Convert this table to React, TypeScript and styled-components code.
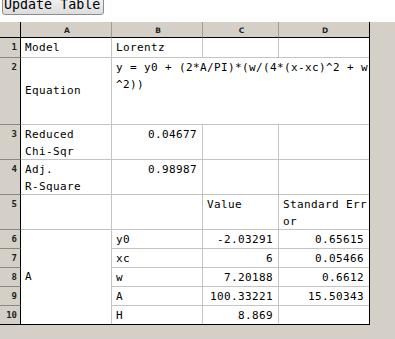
import React from "react";
import styled, { createGlobalStyle } from "styled-components";

const GlobalStyle = createGlobalStyle`
  html, body {
    margin: 0;
    padding: 0;
    background: #ffffff;
  }
  body {
    font-family: "DejaVu Sans Mono", monospace;
  }
`;

interface CellDef {
	text?: string;
	align?: "left" | "right";
	middle?: boolean;
	colSpan?: number;
	rowSpan?: number;
}

interface RowDef {
	n: number;
	height: number;
	cells: CellDef[];
}

const columns = ["A", "B", "C", "D"];
const colWidths = [21, 91, 91, 76, 90];
const headerHeight = 16;

const num = (text: string): CellDef => ({ text, align: "right" });

const rows: RowDef[] = [
	{ n: 1, height: 20, cells: [{ text: "Model" }, { text: "Lorentz" }, {}, {}] },
	{
		n: 2,
		height: 67,
		cells: [
			{ text: "Equation", middle: true },
			{ text: "y = y0 + (2*A/PI)*(w/(4*(x-xc)^2 + w\n^2))", colSpan: 3 },
		],
	},
	{ n: 3, height: 35, cells: [{ text: "Reduced\nChi-Sqr" }, num("0.04677"), {}, {}] },
	{ n: 4, height: 35, cells: [{ text: "Adj.\nR-Square" }, num("0.98987"), {}, {}] },
	{ n: 5, height: 35, cells: [{}, {}, { text: "Value" }, { text: "Standard Err\nor" }] },
	{
		n: 6,
		height: 19,
		cells: [
			{ text: "A", middle: true, rowSpan: 5 },
			{ text: "y0" },
			num("-2.03291"),
			num("0.65615"),
		],
	},
	{ n: 7, height: 19, cells: [{ text: "xc" }, num("6"), num("0.05466")] },
	{ n: 8, height: 19, cells: [{ text: "w" }, num("7.20188"), num("0.6612")] },
	{ n: 9, height: 19, cells: [{ text: "A" }, num("100.33221"), num("15.50343")] },
	{ n: 10, height: 18, cells: [{ text: "H" }, num("8.869"), {}] },
];

/* exported component */
const App = () => {
	const lastRow = rows[rows.length - 1].n;
	return (
		<>
			<GlobalStyle />
			<Page>
				<Toolbar>
					<UpdateButton type="button">Update Table</UpdateButton>
				</Toolbar>
				<SheetArea>
					<Sheet
						$cols={colWidths.map((w) => `${w}px`).join(" ")}
						$rows={[headerHeight, ...rows.map((r) => r.height)]
							.map((h) => `${h}px`)
							.join(" ")}
					>
						<Corner />
						{columns.map((c, i) => (
							<ColHeader key={c} $last={i === columns.length - 1}>
								{c}
							</ColHeader>
						))}
						{rows.map((row) => {
							let col = 0;
							return (
								<React.Fragment key={row.n}>
									<RowHeader $last={row.n === lastRow}>{row.n}</RowHeader>
									{row.cells.map((cell, i) => {
										const span = cell.colSpan || 1;
										const rowSpan = cell.rowSpan || 1;
										// cells of rows 7-10 start after the merged "A" cell
										const start = row.n > 6 ? 1 : 0;
										col += span;
										const endsRight = start + col === columns.length;
										const endsBottom = row.n + rowSpan - 1 === lastRow;
										return (
											<Cell
												key={i}
												$align={cell.align || "left"}
												$middle={!!cell.middle}
												$colSpan={span}
												$rowSpan={rowSpan}
												$noRight={endsRight}
												$noBottom={endsBottom}
											>
												{cell.text}
											</Cell>
										);
									})}
								</React.Fragment>
							);
						})}
					</Sheet>
				</SheetArea>
			</Page>
		</>
	);
};

export default App;

// Styled Components
const Page = styled.div`
	display: flex;
	flex-direction: column;
	min-height: 100vh;
`;

const Toolbar = styled.div`
	height: 22px;
	overflow: hidden;
	padding-left: 2px;
	background: #ffffff;
`;

const UpdateButton = styled.button`
	display: block;
	margin-top: -6px;
	height: 21px;
	padding: 0 3px 0 1px;
	font-family: "DejaVu Sans Mono", monospace;
	font-size: 13.33px;
	color: #000000;
	background: linear-gradient(#f6f6f6, #dcdcdc);
	border: 1px solid #8c8c8c;
	border-radius: 3px;
`;

const SheetArea = styled.div`
	flex: 1;
	background: #d4d0c8;
`;

const Sheet = styled.div<{ $cols: string; $rows: string }>`
	display: grid;
	grid-template-columns: ${(p) => p.$cols};
	grid-template-rows: ${(p) => p.$rows};
	width: max-content;
	background: #ffffff;
	border-right: 1px solid #000000;
	border-bottom: 1px solid #000000;
`;

const HeaderBase = styled.div`
	box-sizing: border-box;
	background: #d4d0c8;
	color: #222222;
	font-weight: bold;
`;

const Corner = styled(HeaderBase)`
	border-right: 1px solid #000000;
	border-bottom: 1px solid #000000;
`;

const ColHeader = styled(HeaderBase)<{ $last: boolean }>`
	display: flex;
	align-items: center;
	justify-content: center;
	padding: 1px 0 0 2px;
	font-family: "DejaVu Sans", sans-serif;
	font-size: 7.5px;
	border-right: ${(p) => (p.$last ? "none" : "1px solid #a09c94")};
	border-bottom: 1px solid #000000;
`;

const RowHeader = styled(HeaderBase)<{ $last: boolean }>`
	padding: 1px 3px 0 0;
	text-align: right;
	font-family: "DejaVu Sans Mono", monospace;
	font-size: 9px;
	line-height: 16.7px;
	border-right: 1px solid #000000;
	border-bottom: ${(p) => (p.$last ? "none" : "1px solid #8c8880")};
`;

const Cell = styled.div<{
	$align: "left" | "right";
	$middle: boolean;
	$colSpan: number;
	$rowSpan: number;
	$noRight: boolean;
	$noBottom: boolean;
}>`
	box-sizing: border-box;
	grid-column: span ${(p) => p.$colSpan};
	grid-row: span ${(p) => p.$rowSpan};
	display: flex;
	flex-direction: column;
	justify-content: ${(p) => (p.$middle ? "center" : "flex-start")};
	padding: ${(p) => (p.$middle ? "0 5px 0 4px" : "2px 5px 0 4px")};
	text-align: ${(p) => p.$align};
	white-space: pre;
	font-family: "DejaVu Sans Mono", monospace;
	font-size: 11px;
	letter-spacing: 0.38px;
	line-height: 16.7px;
	color: #000000;
	border-right: ${(p) => (p.$noRight ? "none" : "1px solid #c4c4c4")};
	border-bottom: ${(p) => (p.$noBottom ? "none" : "1px solid #c4c4c4")};
`;
